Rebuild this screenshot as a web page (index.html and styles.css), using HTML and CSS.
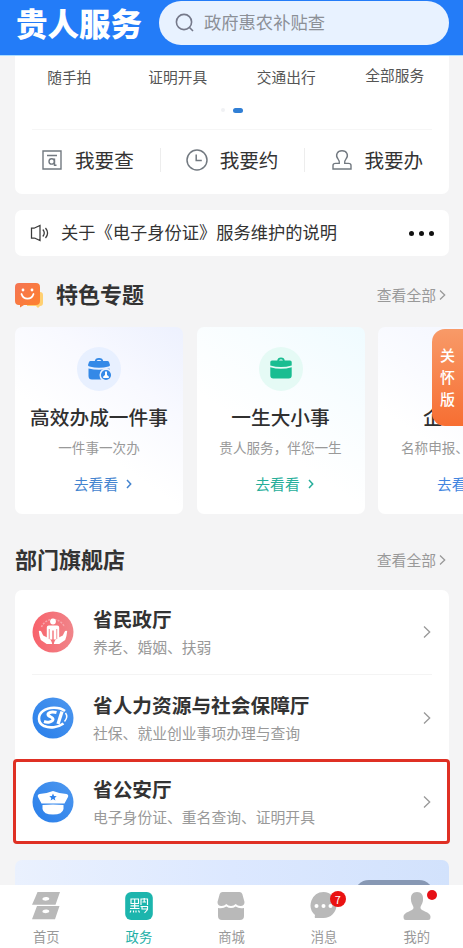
FILE: index.html
```html
<!DOCTYPE html>
<html lang="zh-CN">
<head>
<meta charset="utf-8">
<title>贵人服务</title>
<link rel="stylesheet" href="styles.css">
</head>
<body>
<div class="app">
  <header class="header">
    <h1 class="brand">贵人服务</h1>
    <div class="search">
      <svg class="search-icon" width="20" height="20" viewBox="0 0 20 20" fill="none" stroke="#75798a" stroke-width="1.600"><circle cx="9" cy="9" r="7.600"/><path d="M14.500 14.500l3.500 3.500"/></svg>
      <span>政府惠农补贴查</span>
    </div>
  </header>

  <main class="content">
    <section class="card services">
      <div class="service-names">
        <span>随手拍</span><span>证明开具</span><span>交通出行</span><span class="all">全部服务</span>
      </div>
      <div class="dots"><i></i><i class="on"></i></div>
      <div class="actions">
        <div class="action">
          <svg width="22" height="22" viewBox="0 0 22 22" fill="none" stroke="#727980" stroke-width="1.400"><path d="M2 2h18v18H2zM6 6.500h10"/><circle cx="10.700" cy="12.400" r="2.700"/><path d="M13.500 9.400v6.800h2"/></svg>
          <span>我要查</span>
        </div>
        <div class="action">
          <svg width="22" height="22" viewBox="0 0 22 22" fill="none" stroke="#727980" stroke-width="1.500"><circle cx="11" cy="11" r="10"/><path d="M10.200 5.500v6.100h5.600"/></svg>
          <span>我要约</span>
        </div>
        <div class="action">
          <svg width="22" height="22" viewBox="0 0 22 22" fill="none" stroke="#727980" stroke-width="1.400"><path d="M9.300 14.400c.4-2-.1-3-1.200-4.300C5 6.500 7.100 1.700 12 1.700s7 4.800 3.900 8.400c-1.100 1.300-1.600 2.300-1.200 4.300h3.800c1.500 0 2.500.8 2.500 2v3.600H3v-3.600c0-1.200 1-2 2.500-2z"/></svg>
          <span>我要办</span>
        </div>
      </div>
    </section>

    <section class="card notice">
      <svg width="20" height="18" viewBox="0 0 20 18" fill="none" stroke="#3b3b3b" stroke-width="1.250"><path d="M4.500 4H1.500v10h3M4.500 4L10 1.400v15.200L4.500 14M12.800 5.500c1.700 2 1.700 5 0 7M15.500 4c2.500 3 2.500 7 0 10"/></svg>
      <span class="notice-text">关于《电子身份证》服务维护的说明</span>
      <span class="more"><i></i><i></i><i></i></span>
    </section>

    <div class="section-head topics-head">
      <svg class="smile" width="28" height="26" viewBox="0 0 28 26"><defs><linearGradient id="face" x1="0" y1="0" x2="1" y2="1"><stop stop-color="#f47454"/><stop offset="1" stop-color="#ff812c"/></linearGradient></defs><path d="M12 10h13q3 0 3 3v8q0 3-3 3l-2 2-2-2h-9z" fill="#ffd071"/><path d="M4 1h17q4 0 4 4v14q0 4-4 4H9l-4 2.600V23H4q-4 0-4-4V5q0-4 4-4z" fill="url(#face)"/><circle cx="8" cy="8" r="1.400" fill="#fff"/><circle cx="17" cy="8" r="1.400" fill="#fff"/><path d="M6.500 12c2 6.200 10 6.200 12 0" fill="none" stroke="#fff" stroke-width="1.800" stroke-linecap="round"/></svg>
      <h2>特色专题</h2>
      <span class="view-all">查看全部<svg width="7" height="12" viewBox="0 0 7 12"><path d="M1 1.500L5.700 6 1 10.500"/></svg></span>
    </div>

    <section class="topics">
      <article class="topic lilac">
        <div class="topic-icon">
          <svg width="26" height="26" viewBox="0 0 26 26"><path d="M9.500 5.500C10 2 16 2 16.500 5.500" fill="none" stroke="#3489e7" stroke-width="1.700"/><path d="M4.500 5h17q1 0 1.500 1l1 3q0 1.200-1.500 1.500-9.500 2.500-19 0Q2 10.200 2 9l1-3q.5-1 1.500-1z" fill="#3489e7"/><path d="M2.500 12.500q10.500 2.500 21 0V20q0 3.500-3.500 3.500H6q-3.500 0-3.500-3.500z" fill="#3489e7"/><circle cx="20" cy="19" r="5.800" fill="#3489e7" stroke="#e8f0ff" stroke-width="1.500"/><path d="M19 15.500h2v3.500l1.800 1.500v1.500h-5.600v-1.500L19 19z" fill="#fff"/></svg>
        </div>
        <h3>高效办成一件事</h3>
        <p>一件事一次办</p>
        <a class="go">去看看<svg width="6" height="10" viewBox="0 0 6 10"><path d="M1 1l3.700 4L1 9"/></svg></a>
      </article>
      <article class="topic mint">
        <div class="topic-icon">
          <svg width="26" height="26" viewBox="0 0 26 26"><path d="M10 5C10.500 1.500 15.500 1.500 16 5" fill="none" stroke="#19bd91" stroke-width="1.800"/><path d="M4 4.500h18q1.700 0 1.700 1.500v3.500q-10.700 3-21.400 0V6q0-1.500 1.700-1.500z" fill="#19bd91"/><path d="M2.300 11.300q10.700 3 21.400 0V19.500q0 3-3 3H5.300q-3 0-3-3z" fill="#19bd91"/></svg>
        </div>
        <h3>一生大小事</h3>
        <p>贵人服务，伴您一生</p>
        <a class="go">去看看<svg width="6" height="10" viewBox="0 0 6 10"><path d="M1 1l3.700 4L1 9"/></svg></a>
      </article>
      <article class="topic partial">
        <h3>企</h3>
        <p>名称申报、</p>
        <a class="go">去看</a>
      </article>
      <aside class="care"><span>关</span><span>怀</span><span>版</span></aside>
    </section>

    <div class="section-head depts-head">
      <h2>部门旗舰店</h2>
      <span class="view-all">查看全部<svg width="7" height="12" viewBox="0 0 7 12"><path d="M1 1.500L5.700 6 1 10.500"/></svg></span>
    </div>

    <section class="card depts">
      <div class="dept">
        <svg class="dept-icon" width="42" height="42" viewBox="0 0 42 42"><defs><linearGradient id="red"><stop stop-color="#f8626b"/><stop offset="1" stop-color="#f0858a"/></linearGradient></defs><circle cx="21" cy="21" r="20.500" fill="url(#red)"/><path d="M9.500 16a12.500 12.500 0 0 1 23 0" fill="none" stroke="#f7a5ab" stroke-width="1.500" stroke-dasharray="2 1.200"/><g fill="#fff"><circle cx="21" cy="10.500" r="2.900"/><path d="M14.800 16.500q0-2 2-2h8.400q2 0 2 2v10.500h-2v-9h-.8v10.500h-2.700v-9h-1.400v9h-2.700V18h-.8v9h-2z"/><path d="M6.800 20q2-.8 2.700 1l1.700 3.500 5 2.500q3.500 2 4 6h-5.500l-5.900-4q-1.500-3.500-2-9zM35.200 20q-2-.8-2.700 1l-1.700 3.500-5 2.500q-3.500 2-4 6h5.500l5.900-4q1.500-3.500 2-9z"/></g></svg>
        <div class="dept-text"><h3>省民政厅</h3><p>养老、婚姻、扶弱</p></div>
        <svg class="arrow" width="8" height="14" viewBox="0 0 8 14"><path d="M1 1.500L6.700 7 1 12.500"/></svg>
      </div>
      <div class="dept">
        <svg class="dept-icon" width="42" height="42" viewBox="0 0 42 42"><defs><linearGradient id="blue" x1="0" y1="1" x2="1" y2="0"><stop stop-color="#287eea"/><stop offset="1" stop-color="#4e98ef"/></linearGradient></defs><circle cx="21" cy="21" r="20.500" fill="url(#blue)"/><g fill="none" stroke="#fff"><path d="M33 14C27 9.500 16.500 10 11 14S5.500 26 12 29c6 2.500 14 1.500 19.500-2.500" stroke-width="2.600"/><path d="M24.500 15.500c-4-1-8-.5-8.500 1.800s5.500 2.700 5 5.200-5.500 3.300-9 2" stroke-width="3"/><path d="M30 14.500L26 27" stroke-width="3.300"/><path d="M33.500 16q3 4-1 8.500" stroke-width="1.500"/></g></svg>
        <div class="dept-text"><h3>省人力资源与社会保障厅</h3><p>社保、就业创业事项办理与查询</p></div>
        <svg class="arrow" width="8" height="14" viewBox="0 0 8 14"><path d="M1 1.500L6.700 7 1 12.500"/></svg>
      </div>
      <div class="dept marked">
        <svg class="dept-icon" width="42" height="42" viewBox="0 0 42 42"><circle cx="21" cy="21" r="20.500" fill="url(#blue)"/><path d="M7.500 13Q15 12.500 21 10 27 12.500 34.500 13q2.300.5 1.500 3L32.500 22.500H9.500L6 16q-.8-2.500 1.500-3zM10.500 24Q21 23 31.500 24V28q-1 5.500-10.500 5.500T10.500 28z" fill="#fff"/><path d="M21 12.500l1.100 2.500 2.600.2-2 1.800.7 2.600-2.400-1.500-2.400 1.500.7-2.600-2-1.800 2.600-.2z" fill="#2f82ec"/></svg>
        <div class="dept-text"><h3>省公安厅</h3><p>电子身份证、重名查询、证明开具</p></div>
        <svg class="arrow" width="8" height="14" viewBox="0 0 8 14"><path d="M1 1.500L6.700 7 1 12.500"/></svg>
      </div>
    </section>

    <section class="banner"><div class="banner-pill"></div></section>
  </main>

  <nav class="tabs">
    <a class="tab">
      <svg width="30" height="30" viewBox="0 0 30 30" fill="#b9b9b9"><path fill-rule="evenodd" d="M6.500 1H29l-4.500 12.800H1L4 7zM15 6c-2.500 0-4 1.200-3.500 2.600s5.500 1.400 6.500 0S17.500 6 15 6zM6 15h22.500L24 28.300H1zM15 18.500c-2.500 0-4 1.200-3.500 2.600s5.500 1.400 6.500 0-.5-2.600-3-2.600z"/></svg>
      <span>首页</span>
    </a>
    <a class="tab active">
      <svg width="30" height="30" viewBox="0 0 30 30"><rect x="1.200" y="1" width="27.600" height="28" rx="6" fill="#1cb5ad"/><g fill="none" stroke="#fff" stroke-width="1.150"><path d="M7 8h7.500v4.500H7zM10.700 8v9.500M6.500 14.800h8.500M6 17.500h9.500M7 19.500l-1 2M9.500 19.500v2M12 19.500v2M14.500 19.500l1 2M17 14V8h6.500v6M20.200 7v3.500M18.500 11h3.500M16.500 15.500h7v3l-3 3.500M18 15.500v2.500h5"/></g></svg>
      <span>政务</span>
    </a>
    <a class="tab">
      <svg width="30" height="30" viewBox="0 0 30 30" fill="#b9b9b9"><path d="M6.500 1h17q2 0 2.800 2l2.200 8q0 4-4 4-3 0-4.800-2-2 2-4.700 2t-4.700-2q-1.800 2-4.800 2-4 0-4-4l2.200-8q.8-2 2.800-2z"/><path d="M2 17q5.500.8 8.300-1.500 4.700 3 9.400 0Q22.500 17.800 28 17v8q0 4-4 4H6q-4 0-4-4z"/></svg>
      <span>商城</span>
    </a>
    <a class="tab">
      <svg width="30" height="30" viewBox="0 0 30 30"><path d="M14.500 1a13 13 0 1 1 0 26H6q-.5-1 0-3A13.200 13.200 0 0 1 14.500 1z" fill="#b9b9b9"/><g fill="#fff"><circle cx="7.500" cy="15" r="2"/><circle cx="14.500" cy="15" r="2"/><circle cx="21.500" cy="15" r="2"/></g></svg>
      <b class="badge">7</b>
      <span>消息</span>
    </a>
    <a class="tab">
      <svg width="30" height="30" viewBox="0 0 30 30" fill="#b9b9b9"><path d="M15 1c4.500 0 6.500 3 6 8-.3 4-2.500 5.500-2.500 8 0 3 10 4 10 8.500 0 2.500-.5 3.500-2.500 3.500H4c-2 0-2.500-1-2.500-3.500 0-4.500 10-5.500 10-8.500 0-2.500-2.200-4-2.500-8-.5-5 1.500-8 6-8z"/></svg>
      <i class="badge-dot"></i>
      <span>我的</span>
    </a>
  </nav>
</div>
</body>
</html>
```
FILE: styles.css
```css
* { box-sizing: border-box; margin: 0; padding: 0; }
body { font-family: "Noto Sans CJK SC", sans-serif; color: #333; background: #f4f4f5; }
i { font-style: normal; }
svg { display: block; flex: none; }
.app { width: 463px; height: 948px; display: flex; flex-direction: column; overflow: hidden; }

.header { height: 56px; flex: none; display: flex; padding: 1px 14px 0 16px; background: #237cf8; border-bottom: 1px solid #a9dcff; }
.brand { width: 143px; font-size: 31.500px; line-height: 42px; font-weight: 900; color: #fff; white-space: nowrap; }
.search { width: 290px; height: 44px; border-radius: 22px; background: #e8f2ff; display: flex; align-items: center; padding-left: 16px; gap: 9px; font-size: 17.300px; line-height: 42px; color: #8c9097; }
.search span { padding-bottom: 3px; }

.content { flex: 1; min-height: 0; overflow: hidden; padding: 0 14px 0 15px; }
.card { background: #fff; border-radius: 7px; }

.services { height: 138px; border-radius: 0 0 7px 7px; padding-top: 10px; }
.service-names { display: grid; grid-template-columns: repeat(4, 108.500px); font-size: 14.700px; line-height: 21px; color: #555; text-align: center; }
.service-names .all { line-height: 17px; }
.dots { display: flex; gap: 8px; justify-content: center; align-items: center; height: 6px; margin-top: 20px; }
.dots i { width: 4px; height: 4px; border-radius: 2px; background: #f0f1f4; }
.dots .on { width: 10px; height: 5px; border-radius: 3px; background: #317fd5; }
.actions { display: grid; grid-template-columns: repeat(3, 144.700px); margin-top: 16px; padding-top: 19px; background: linear-gradient(#f6f6f6, #f6f6f6) 17px 0 / 400px 1px no-repeat; }
.action { height: 24px; display: flex; align-items: center; padding-left: 26px; gap: 12px; font-size: 19.600px; line-height: 24px; white-space: nowrap; }
.action span { padding-bottom: 1px; }
.action + .action { background: linear-gradient(#ededed, #ededed) 0 0 / 1px 24px no-repeat; }

.notice { height: 46px; margin-top: 16px; padding: 0 15px; display: flex; align-items: center; font-size: 17.250px; line-height: 42px; white-space: nowrap; }
.notice-text { margin-left: 11px; flex: 1; padding-bottom: 2px; }
.more { display: flex; gap: 5px; }
.more i { width: 5px; height: 5px; border-radius: 50%; background: #111; }

.section-head { display: flex; align-items: center; height: 32px; }
.section-head h2 { font-size: 22px; line-height: 30px; padding-bottom: 4px; font-weight: 700; }
.topics-head { margin-top: 23px; }
.smile { margin-right: 13px; }
.view-all { margin-left: auto; display: flex; align-items: center; gap: 3px; padding: 0 3px 1px 0; font-size: 14.800px; line-height: 30px; color: #999; }
.view-all svg, .go svg, .arrow { fill: none; stroke: currentColor; stroke-width: 1.300; }

.topics { margin-top: 16px; height: 187px; display: grid; grid-template-columns: 168px 168px 168px; gap: 13.500px; position: relative; }
.topic { background: #fff; border-radius: 7px; padding-top: 20px; display: flex; flex-direction: column; align-items: center; white-space: nowrap; color: #4484cf; }
.lilac { background: linear-gradient(215deg, #edf1fe 0%, #f8f9ff 30%, #fff 60%); }
.mint { background: linear-gradient(215deg, #effbff 0%, #f8fdff 30%, #fff 60%); color: #26ae9a; }
.topic-icon { width: 44px; height: 44px; border-radius: 50%; background: #e8f0ff; display: grid; place-items: center; }
.mint .topic-icon { background: #e5faf5; }
.topic h3 { margin-top: 11px; font-size: 19.700px; line-height: 30px; font-weight: 500; color: #303030; }
.topic p { margin-top: 5px; font-size: 13.600px; line-height: 20px; color: #999; }
.go { margin-top: 16px; padding-left: 8px; display: flex; align-items: center; gap: 8px; font-size: 14.800px; line-height: 22px; }
.go svg { stroke-width: 1.500; }
.topic.partial { align-items: flex-start; padding-top: 75px; background: linear-gradient(215deg, #f0f4ff 0%, #fafbff 45%, #fff 65%); color: #4285df; }
.partial h3 { margin-top: 0; padding-left: 45px; }
.partial p { padding-left: 23px; }
.partial .go { padding-left: 59px; }
.care { position: absolute; right: -14px; top: 2px; width: 31px; height: 97px; border-radius: 13px 0 0 13px; background: linear-gradient(#f89a68, #f76e32); color: #fff; font-size: 15px; line-height: 22px; font-weight: 500; display: flex; flex-direction: column; align-items: center; justify-content: center; padding-bottom: 2px; }

.depts-head { margin-top: 30px; }
.depts { margin-top: 14px; height: 254px; }
.dept { height: 85px; margin: 0 17px; display: flex; align-items: center; border-bottom: 1px solid #f4f4f4; }
.dept-text { margin-left: 19px; flex: 1; white-space: nowrap; padding-bottom: 1px; }
.dept h3 { font-size: 19.700px; line-height: 28px; font-weight: 700; }
.dept p { font-size: 14.800px; line-height: 22px; margin-top: 3px; color: #999; }
.arrow { color: #999; margin-right: 1px; }
.dept:nth-child(2) { border-bottom: 0; }
.dept.marked { margin: -1px -1px 0 -2px; height: 85px; padding: 1px 15px 0 16px; border: 3px solid #df3024; border-radius: 4px; }

.banner { height: 60px; margin-top: 16px; border-radius: 7px; background: linear-gradient(90deg, #eaf1fe, #dce8ff 50%, #d2e2fc); display: flex; justify-content: flex-end; padding: 20px 15px 0 0; }
.banner-pill { width: 80px; height: 30px; border-radius: 15px; background: #8798b4; }

.tabs { height: 63px; flex: none; background: #fff; display: grid; grid-template-columns: repeat(5, 1fr); }
.tab { position: relative; display: flex; flex-direction: column; align-items: center; padding-top: 6px; color: #999; font-size: 13.300px; line-height: 20px; }
.tab span { margin-top: 6px; }
.tab.active { color: #1eb0a7; }
.badge { position: absolute; left: 52px; top: 6px; width: 16px; height: 16px; border-radius: 50%; background: #ea1212; color: #fff; font-size: 11px; line-height: 16px; font-weight: 400; text-align: center; }
.badge-dot { position: absolute; left: 57px; top: 5px; width: 10px; height: 10px; border-radius: 50%; background: #e60f16; }
```
